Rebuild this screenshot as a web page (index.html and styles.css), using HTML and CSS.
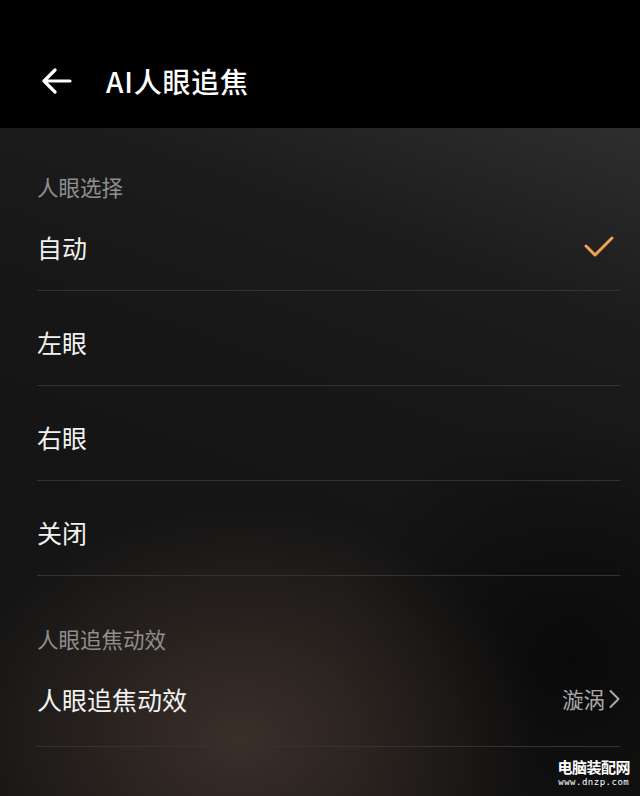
FILE: index.html
```html
<!DOCTYPE html>
<html lang="zh-CN">

<head>
    <meta charset="UTF-8" />
    <meta name="viewport" content="width=device-width, initial-scale=1" />
    <title>AI人眼追焦</title>
    <link rel="stylesheet" href="styles.css">
</head>

<body>
    <header class="topbar">
        <button class="back-btn" aria-label="返回">
            <svg width="30" height="26" viewBox="0 0 30 26">
                <path d="M2 13 H28 M13 2 L2 13 L13 24" fill="none" stroke="#fff" stroke-width="3.2"
                    stroke-linecap="round" stroke-linejoin="round" />
            </svg>
        </button>
        <h1>AI人眼追焦</h1>
    </header>

    <main class="settings">
        <section class="group">
            <div class="section-title">人眼选择</div>
            <div class="row">
                <span class="label">自动</span>
                <svg class="check" width="30" height="24" viewBox="0 0 30 24">
                    <path d="M2 11 L11 20 L28 3" fill="none" stroke="#f2a24e" stroke-width="3"
                        stroke-linecap="round" stroke-linejoin="round" />
                </svg>
            </div>
            <div class="row"><span class="label">左眼</span></div>
            <div class="row"><span class="label">右眼</span></div>
            <div class="row"><span class="label">关闭</span></div>
        </section>

        <section class="group second">
            <div class="section-title">人眼追焦动效</div>
            <div class="row nav">
                <span class="label">人眼追焦动效</span>
                <span class="value">漩涡
                    <svg class="chevron" width="11" height="20" viewBox="0 0 11 20">
                        <path d="M1.5 2 L9.5 10 L1.5 18" fill="none" stroke="#a8a8a8" stroke-width="2"
                            stroke-linecap="round" stroke-linejoin="round" />
                    </svg>
                </span>
            </div>
        </section>
    </main>

    <div class="watermark">
        <div class="wm-name">电脑装配网</div>
        <div class="wm-url">www.dnzp.com</div>
    </div>
</body>

</html>
```

FILE: styles.css
```css
body {
    margin: 0;
    width: 640px;
    height: 796px;
    overflow: hidden;
    position: relative;
    font-family: "Noto Sans CJK SC", "Noto Sans", sans-serif;
    background-color: #000;
    color: #f0f0f0;
}

.topbar {
    height: 128px;
    background-color: #000;
    display: flex;
    align-items: center;
    padding: 34px 0 0 42px;
    box-sizing: border-box;
}

.back-btn {
    background: none;
    border: none;
    padding: 0;
    width: 30px;
    height: 26px;
    display: flex;
}

.topbar h1 {
    margin: 0 0 0 34px;
    font-size: 28px;
    font-weight: 500;
    color: #fff;
    letter-spacing: 0.8px;
}

.settings {
    height: 668px;
    padding: 0 20px 0 37px;
    background:
        radial-gradient(ellipse 300px 230px at 240px 610px, rgba(72, 56, 48, 0.75), rgba(72, 56, 48, 0) 100%),
        radial-gradient(ellipse 240px 240px at 570px 530px, rgba(8, 8, 8, 0.85), rgba(8, 8, 8, 0) 100%),
        linear-gradient(200deg, #2e2e2e 0%, #1c1c1c 22%, #161616 45%, #131313 100%);
}

.section-title {
    padding-top: 47px;
    margin-bottom: -3px;
    font-size: 21.5px;
    line-height: 24px;
    color: #8f8f8f;
}

.group.second {
    margin-top: 4px;
}

.row {
    display: flex;
    align-items: center;
    justify-content: space-between;
    padding: 39px 0 31px;
    border-bottom: 1px solid #333;
}

.row.nav {
    padding-bottom: 35px;
}

.label {
    font-size: 25px;
    line-height: 24px;
    color: #f2f2f2;
}

.check {
    margin: 0 6px 0 0;
}

.value {
    display: flex;
    align-items: center;
    gap: 4px;
    font-size: 21.5px;
    line-height: 24px;
    color: #a8a8a8;
}

.watermark {
    position: absolute;
    right: 10px;
    bottom: 8px;
    text-align: center;
    color: #fff;
}

.wm-name {
    font-size: 15px;
    font-weight: 700;
    line-height: 18px;
    letter-spacing: -0.5px;
}

.wm-url {
    font-family: "DejaVu Sans Mono", monospace;
    font-size: 9px;
    line-height: 12px;
    letter-spacing: 0.5px;
}
```
